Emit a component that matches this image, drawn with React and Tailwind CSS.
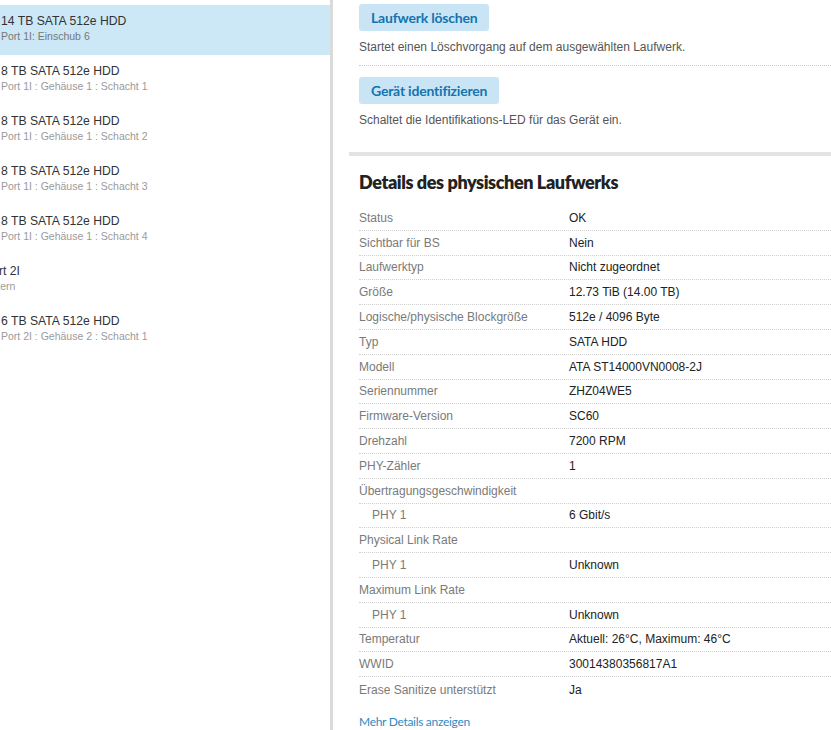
import React from 'react';

const drives = [
  { title: '14 TB SATA 512e HDD', sub: 'Port 1I: Einschub 6', selected: true },
  { title: '8 TB SATA 512e HDD', sub: 'Port 1I : Gehäuse 1 : Schacht 1' },
  { title: '8 TB SATA 512e HDD', sub: 'Port 1I : Gehäuse 1 : Schacht 2' },
  { title: '8 TB SATA 512e HDD', sub: 'Port 1I : Gehäuse 1 : Schacht 3' },
  { title: '8 TB SATA 512e HDD', sub: 'Port 1I : Gehäuse 1 : Schacht 4' },
  { title: 'Port 2I', sub: 'Extern', group: true },
  { title: '6 TB SATA 512e HDD', sub: 'Port 2I : Gehäuse 2 : Schacht 1' },
];

const details = [
  ['Status', 'OK'],
  ['Sichtbar für BS', 'Nein'],
  ['Laufwerktyp', 'Nicht zugeordnet'],
  ['Größe', '12.73 TiB (14.00 TB)'],
  ['Logische/physische Blockgröße', '512e / 4096 Byte'],
  ['Typ', 'SATA HDD'],
  ['Modell', 'ATA ST14000VN0008-2J'],
  ['Seriennummer', 'ZHZ04WE5'],
  ['Firmware-Version', 'SC60'],
  ['Drehzahl', '7200 RPM'],
  ['PHY-Zähler', '1'],
  ['Übertragungsgeschwindigkeit', ''],
  ['PHY 1', '6 Gbit/s', true],
  ['Physical Link Rate', ''],
  ['PHY 1', 'Unknown', true],
  ['Maximum Link Rate', ''],
  ['PHY 1', 'Unknown', true],
  ['Temperatur', 'Aktuell: 26°C, Maximum: 46°C'],
  ['WWID', '30014380356817A1'],
  ['Erase Sanitize unterstützt', 'Ja', false, true],
];

const hpFont = "font-['Lato','Roboto',sans-serif]";

function ActionButton({ children }) {
  return (
    <button className={`h-[27px] px-3 rounded-[3px] bg-[#c9e5f5] text-[#1474b0] text-[14px] font-bold tracking-[-0.2px] ${hpFont}`}>
      {children}
    </button>
  );
}

export default function App() {
  return (
    <div className="flex w-[831px] h-[730px] overflow-hidden bg-white font-['Liberation_Sans',Arial,sans-serif]">
      {/* Drive list */}
      <div className="w-[333px] shrink-0 border-r-[3px] border-[#dadada] overflow-hidden pt-[5px]">
        {drives.map((d, i) => (
          <div
            key={i}
            className={`h-[50px] pt-[8px] pl-px ${d.selected ? 'bg-[#cce7f6]' : ''}`}
          >
            <div className={`text-[12.2px] leading-[16px] text-[#333] whitespace-nowrap ${d.group ? 'ml-[-17px]' : ''}`}>
              {d.title}
            </div>
            <div className={`text-[10.5px] leading-[14px] whitespace-nowrap ${d.selected ? 'text-[#777]' : 'text-[#9a9a9a]'} ${d.group ? 'ml-[-16px]' : ''}`}>
              {d.sub}
            </div>
          </div>
        ))}
      </div>

      {/* Details */}
      <div className="flex-1 pl-4 min-w-0">
        <div className="pl-[10px] pt-[4px] pb-[24px]">
          <ActionButton>Laufwerk löschen</ActionButton>
          <p className="mt-[8px] text-[12px] leading-[16px] text-[#555]">
            Startet einen Löschvorgang auf dem ausgewählten Laufwerk.
          </p>
          <div className="mt-[10px] border-b border-dotted border-[#c8c8c8]" />
          <div className="mt-[11px]">
            <ActionButton>Gerät identifizieren</ActionButton>
          </div>
          <p className="mt-[8px] text-[12px] leading-[16px] text-[#555]">
            Schaltet die Identifikations-LED für das Gerät ein.
          </p>
        </div>

        <div className="h-[4px] bg-[#e3e3e3]" />

        <div className="pl-[10px]">
          <h2 className={`mt-[10px] h-[32px] leading-[32px] text-[18px] font-extrabold text-[#222] tracking-[-0.4px] ${hpFont}`}>
            Details des physischen Laufwerks
          </h2>
          <div className="mt-[8px]">
            {details.map(([label, value, indent, last], i) => (
              <div
                key={i}
                className={`flex items-center h-[24.8px] text-[12px] ${last ? '' : 'border-b border-dotted border-[#d0d0d0]'}`}
              >
                <div className={`w-[210px] shrink-0 text-[#7a7a7a] ${indent ? 'pl-[13px]' : ''}`}>{label}</div>
                <div className="text-[#222]">{value}</div>
              </div>
            ))}
          </div>
          <a href="#" className={`block mt-[12px] text-[12px] leading-[16px] tracking-[-0.3px] text-[#2e8bc4] ${hpFont}`}>
            Mehr Details anzeigen
          </a>
        </div>
      </div>
    </div>
  );
}
